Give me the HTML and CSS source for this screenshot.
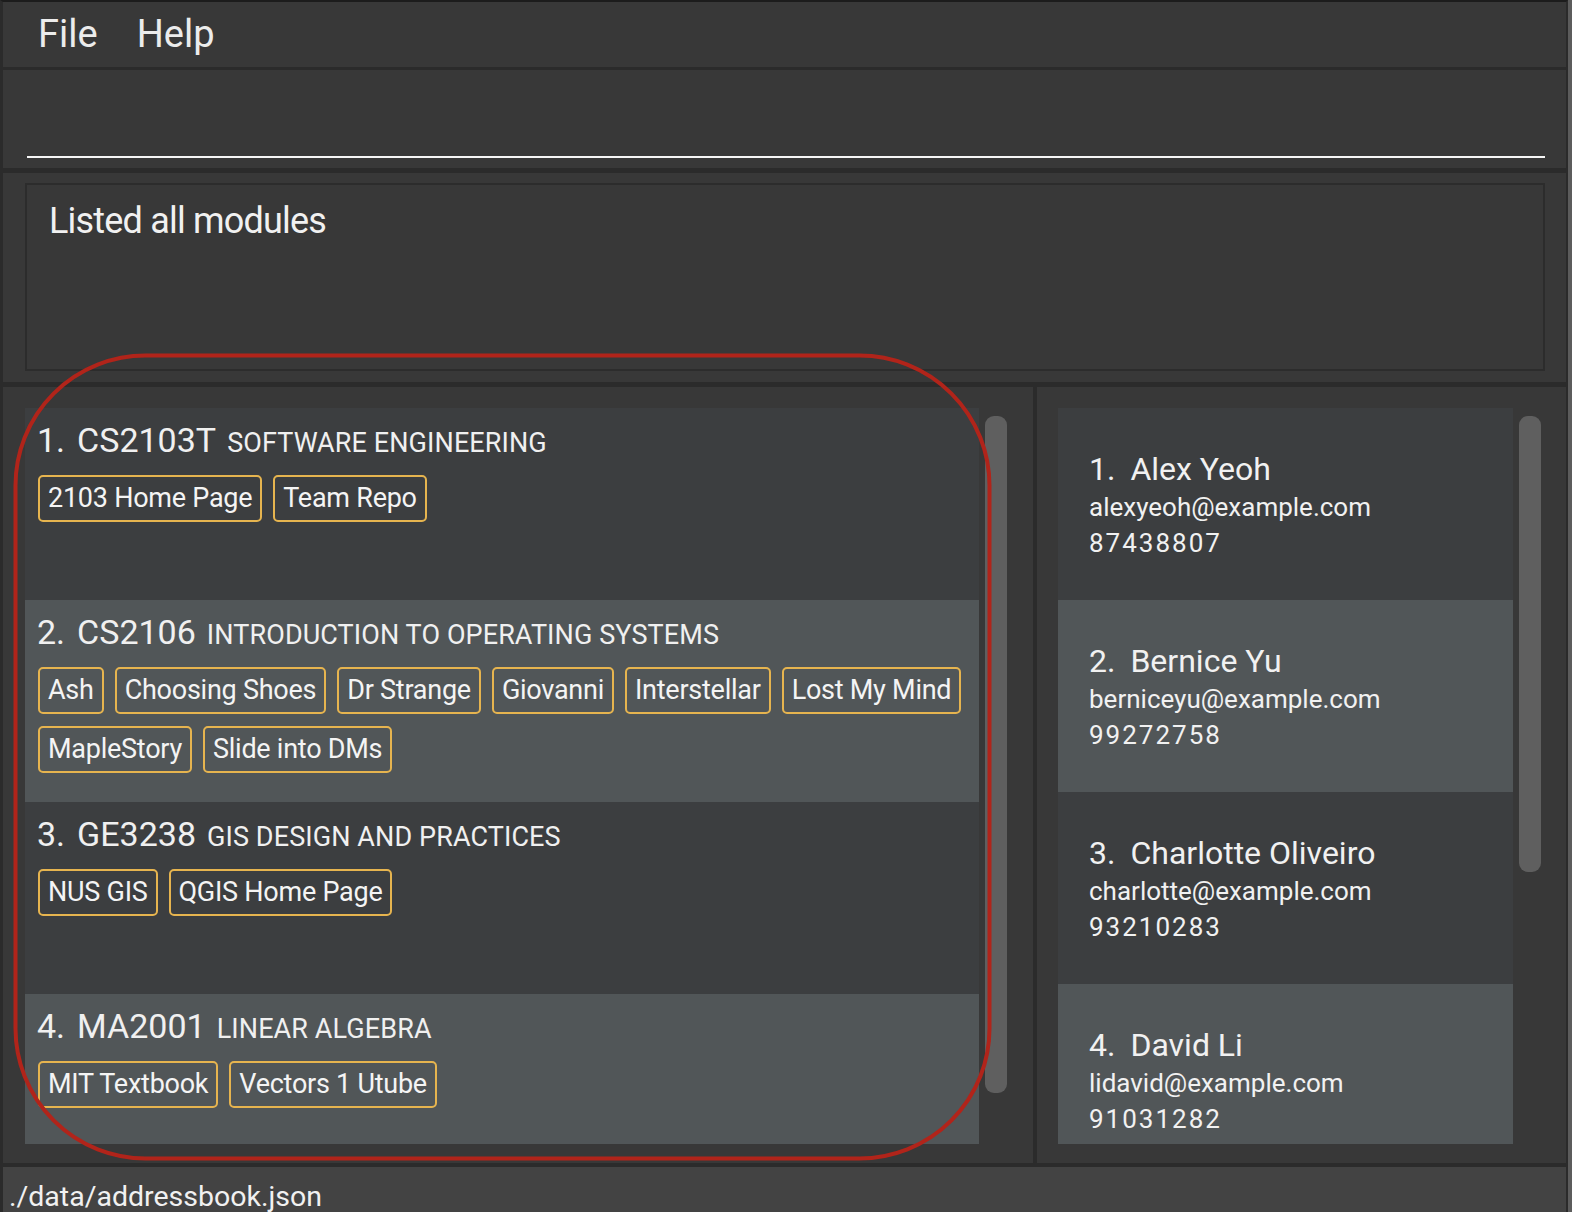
FILE: index.html
```html
<!DOCTYPE html>
<html lang="en">
<head>
<meta charset="utf-8">
<title>Address Book</title>
<link rel="stylesheet" href="styles.css">
</head>
<body>
<div class="frame">
  <div class="window">
    <div class="menubar">
      <span class="menu">File</span>
      <span class="menu">Help</span>
    </div>
    <div class="command"><div class="command-input"></div></div>
    <div class="result"><div class="result-box">Listed all modules</div></div>
    <div class="lists">
      <div class="panel panel-left">
        <div class="list module-list">
          <div class="module-card dark">
            <div class="title"><span class="num">1.</span><span class="code">CS2103T</span><span class="mname">SOFTWARE ENGINEERING</span></div>
            <div class="tags"><span class="tag">2103 Home Page</span><span class="tag">Team Repo</span></div>
          </div>
          <div class="module-card light">
            <div class="title"><span class="num">2.</span><span class="code">CS2106</span><span class="mname">INTRODUCTION TO OPERATING SYSTEMS</span></div>
            <div class="tags"><span class="tag">Ash</span><span class="tag">Choosing Shoes</span><span class="tag">Dr Strange</span><span class="tag">Giovanni</span><span class="tag">Interstellar</span><span class="tag">Lost My Mind</span><span class="tag">MapleStory</span><span class="tag">Slide into DMs</span></div>
          </div>
          <div class="module-card dark">
            <div class="title"><span class="num">3.</span><span class="code">GE3238</span><span class="mname">GIS DESIGN AND PRACTICES</span></div>
            <div class="tags"><span class="tag">NUS GIS</span><span class="tag">QGIS Home Page</span></div>
          </div>
          <div class="module-card light">
            <div class="title"><span class="num">4.</span><span class="code">MA2001</span><span class="mname">LINEAR ALGEBRA</span></div>
            <div class="tags"><span class="tag">MIT Textbook</span><span class="tag">Vectors 1 Utube</span></div>
          </div>
        </div>
        <div class="scroll"><div class="thumb thumb-left"></div></div>
      </div>
      <div class="panel panel-right">
        <div class="list person-list">
          <div class="person-card dark">
            <div class="pname"><span class="pnum">1.</span>Alex Yeoh</div>
            <div class="pline">alexyeoh@example.com</div>
            <div class="pline phone">87438807</div>
          </div>
          <div class="person-card light">
            <div class="pname"><span class="pnum">2.</span>Bernice Yu</div>
            <div class="pline">berniceyu@example.com</div>
            <div class="pline phone">99272758</div>
          </div>
          <div class="person-card dark">
            <div class="pname"><span class="pnum">3.</span>Charlotte Oliveiro</div>
            <div class="pline">charlotte@example.com</div>
            <div class="pline phone">93210283</div>
          </div>
          <div class="person-card light">
            <div class="pname"><span class="pnum">4.</span>David Li</div>
            <div class="pline">lidavid@example.com</div>
            <div class="pline phone">91031282</div>
          </div>
        </div>
        <div class="scroll"><div class="thumb thumb-right"></div></div>
      </div>
    </div>
    <div class="status">./data/addressbook.json</div>
  </div>
  <svg class="annotation" width="1572" height="1212" viewBox="0 0 1572 1212">
    <rect x="15.5" y="355.5" width="974" height="803" rx="130" ry="130" fill="none" stroke="#b1241a" stroke-width="4"/>
  </svg>
</div>
</body>
</html>
```

FILE: styles.css
```css
html, body {
  margin: 0;
  padding: 0;
  background: #262626;
}

.frame {
  position: relative;
  width: 1572px;
  height: 1212px;
  overflow: hidden;
  background: #5c5c5c;
  padding-right: 4px;
  box-sizing: border-box;
}

.window {
  width: 100%;
  height: 100%;
  box-sizing: border-box;
  border-top: 2px solid #1c1c1c;
  border-left: 3px solid #2b2b2b;
  border-right: 2px solid #2b2b2b;
  background: #383838;
  display: flex;
  flex-direction: column;
  font-family: Roboto, "Liberation Sans", sans-serif;
  color: #f1f1f1;
  overflow: hidden;
}

.menubar {
  height: 65px;
  flex: none;
  display: flex;
  gap: 39px;
  padding-left: 35px;
  font-size: 38px;
  line-height: 65px;
  color: #ececec;
  border-bottom: 3px solid #2b2b2b;
}

.command {
  height: 103px;
  flex: none;
  box-sizing: border-box;
  padding: 86px 21px 0 24px;
  border-bottom: 5px solid #2b2b2b;
}

.command-input {
  height: 0;
  border-bottom: 2px solid #f6f6f6;
}

.result {
  height: 214px;
  flex: none;
  box-sizing: border-box;
  padding: 10px 21px 11px 22px;
  border-bottom: 5px solid #2b2b2b;
}

.result-box {
  height: 100%;
  box-sizing: border-box;
  border: 2px solid #2c2c2c;
  padding: 14px 0 0 22px;
  font-size: 36px;
  line-height: 44px;
  letter-spacing: -0.8px;
}

.lists {
  height: 780px;
  flex: none;
  box-sizing: border-box;
  display: flex;
  border-bottom: 4px solid #2b2b2b;
}

.panel {
  display: flex;
  gap: 6px;
  box-sizing: border-box;
  padding-top: 21px;
}

.panel-left {
  width: 1034px;
  padding-left: 22px;
  border-right: 4px solid #2b2b2b;
}

.panel-right {
  flex: 1;
  padding-left: 21px;
}

.list {
  height: 736px;
  overflow: hidden;
}

.module-list {
  width: 954px;
}

.person-list {
  width: 455px;
}

.dark {
  background: #3c3e40;
}

.light {
  background: #515658;
}

.scroll {
  width: 22px;
  padding-top: 8px;
}

.thumb {
  background: #5f5f5f;
  border-radius: 9px;
}

.thumb-left {
  height: 677px;
}

.thumb-right {
  height: 456px;
}

.module-card {
  min-height: 192px;
  box-sizing: border-box;
  padding: 12px 12px 29px 12px;
}

.title {
  height: 40px;
  font-size: 34px;
  line-height: 40px;
  white-space: nowrap;
  color: #f0f0f0;
}

.num {
  margin-right: 12px;
}

.code {
  margin-right: 11px;
}

.mname {
  font-size: 27px;
  letter-spacing: 0.1px;
}

.tags {
  margin-top: 15px;
  display: flex;
  flex-wrap: wrap;
  gap: 12px 11px;
  padding-left: 1px;
}

.tag {
  border: 2px solid #e6b44f;
  border-radius: 5px;
  padding: 6px 8px;
  font-size: 27px;
  line-height: 31px;
  letter-spacing: -0.25px;
  color: #f4f4f4;
}

.person-card {
  height: 192px;
  box-sizing: border-box;
  padding: 41px 0 0 31px;
}

.pname {
  font-size: 32px;
  line-height: 40px;
  white-space: nowrap;
}

.pnum {
  margin-right: 15px;
}

.pline {
  font-size: 26px;
  line-height: 36px;
  white-space: nowrap;
}

.phone {
  letter-spacing: 2px;
}

.status {
  flex: 1;
  background: #434343;
  padding: 13px 0 0 6px;
  font-size: 28.5px;
  line-height: 33px;
  white-space: nowrap;
}

.annotation {
  position: absolute;
  left: 0;
  top: 0;
  pointer-events: none;
}
```
